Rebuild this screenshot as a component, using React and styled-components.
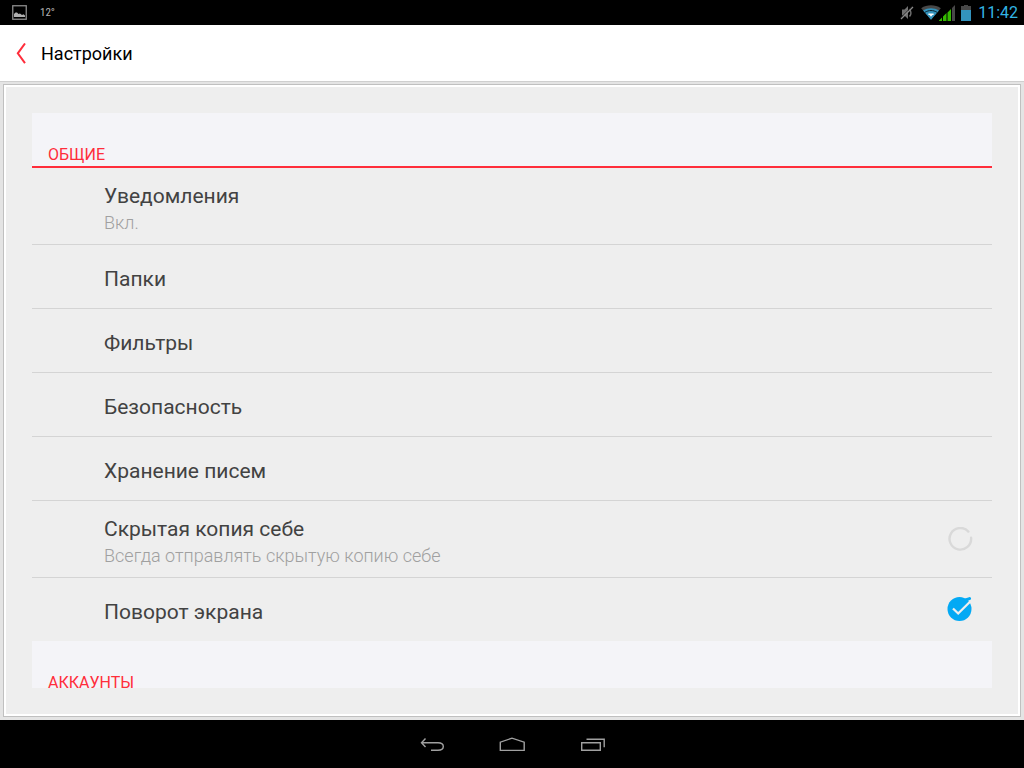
import React, { useState } from "react";
import styled, { createGlobalStyle } from "styled-components";

const GlobalStyle = createGlobalStyle`
  *, *::before, *::after { box-sizing: border-box; }
  body {
    margin: 0;
    background: #000;
    font-family: Roboto, "Noto Sans", sans-serif;
  }
`;

const Screen = styled.div`
  display: flex;
  flex-direction: column;
  height: 100vh;
  background: #e4e4e4;
`;

const StatusBar = styled.div`
  flex: none;
  display: flex;
  align-items: center;
  justify-content: space-between;
  height: 25px;
  padding: 0 6px 0 12px;
  background: #000;
`;

const StatusGroup = styled.div`
  display: flex;
  align-items: center;
  gap: ${(p) => p.$gap}px;
`;

const Clock = styled.time`
  color: #33b5e5;
  font-size: 16px;
  line-height: 25px;
`;

const Header = styled.header`
  flex: none;
  display: flex;
  align-items: center;
  gap: 14px;
  height: 57px;
  padding: 2px 16px 0;
  background: #fff;
  border-bottom: 1px solid #cfcfcf;
`;

const IconButton = styled.button`
  display: flex;
  padding: 0;
  border: 0;
  background: none;
  cursor: pointer;
`;

const Title = styled.h1`
  margin: 0;
  color: #000;
  font-size: 18px;
  line-height: 24px;
  font-weight: 400;
`;

const Panel = styled.main`
  flex: 1;
  min-height: 0;
  display: flex;
  margin: 2px 3px 3px;
  padding: 28px;
  background: #eee;
  border: 1px solid #c0c0c0;
  box-shadow: inset 0 0 0 2px #fff;
`;

const List = styled.div`
  flex: 1;
  min-width: 0;
  overflow-y: auto;
  scrollbar-width: none;
`;

const SectionTitle = styled.h2`
  margin: 0;
  padding: 33px 16px 2px;
  background: #f4f4f8;
  border-bottom: 2px solid #ff2d3b;
  color: #ff2d3b;
  font-size: 16px;
  line-height: 18px;
  font-weight: 400;
`;

const Rows = styled.ul`
  margin: 0;
  padding: 0;
  list-style: none;
`;

const RowItem = styled.li`
  border-bottom: 1px solid #d4d4d4;

  &:last-child { border-bottom: 0; }
`;

const Row = styled.button`
  display: flex;
  align-items: center;
  justify-content: space-between;
  width: 100%;
  padding: ${(p) => (p.$tall ? "10px 19px 9px 72px" : "15px 19px 15px 72px")};
  border: 0;
  background: none;
  font-family: inherit;
  text-align: left;
  cursor: pointer;
`;

const RowText = styled.span`
  display: flex;
  flex-direction: column;
  gap: 1px;
  padding-top: ${(p) => (p.$tall ? 4 : 5)}px;
`;

const RowTitle = styled.span`
  color: #424242;
  font-size: 21px;
  line-height: 28px;
`;

const RowNote = styled.span`
  color: #a0a0a0;
  font-size: 18px;
  line-height: 24px;
  font-weight: 300;
`;

const Toggle = styled.span`
  position: relative;
  display: flex;
  width: 26px;
  height: 26px;
`;

const Checkbox = styled.input`
  position: absolute;
  inset: 0;
  width: 100%;
  height: 100%;
  margin: 0;
  opacity: 0;
  cursor: pointer;
`;

const NavBar = styled.nav`
  flex: none;
  display: flex;
  align-items: center;
  justify-content: center;
  gap: 52px;
  height: 48px;
  padding-top: 2px;
  background: #000;
`;

const PictureIcon = () => (
  <svg width="15" height="15" viewBox="0 0 15 15" aria-hidden="true">
    <rect x="0.75" y="0.75" width="13.5" height="13.5" fill="none" stroke="#8c8c8c" strokeWidth="1.3" />
    <path d="M2 12V9L3.5 7.5H5L6.5 9L8 8.5L10 10L11.5 9.2L13 10.5V12Z" fill="#b0b0b0" />
  </svg>
);

const Temperature = styled.span`
  color: #b4b4b4;
  font-family: "Liberation Sans Narrow", "Roboto Condensed", Roboto, sans-serif;
  font-size: 11px;
  line-height: 25px;
`;

const MutedIcon = () => (
  <svg width="14" height="15" viewBox="0 0 14 15" aria-hidden="true">
    <path d="M2 4.5H4.5L8 1V14L4.5 10.5H2Z" fill="#707070" />
    <path d="M9.5 4.5C11.3 6.5 11.3 9.5 9.5 11.5" fill="none" stroke="#707070" strokeWidth="1.6" />
    <path d="M0.5 13L12.3 1.2" stroke="#1c1c1c" strokeWidth="0.9" />
    <path d="M1 14L13 2" stroke="#8a8a8a" strokeWidth="1.2" />
  </svg>
);

const WifiIcon = () => (
  <svg width="20" height="15" viewBox="0 0 20 15" aria-hidden="true">
    <path d="M0.2 3.2C6 -0.6 14 -0.6 19.8 3.2L10 14.8Z" fill="#484848" />
    <path d="M2.1 5.4C7 2.4 13 2.4 17.9 5.4L10 14.8Z" fill="#3393bd" />
    <path d="M3.8 7.4C7.7 4.9 12.3 4.9 16.2 7.4" fill="none" stroke="#0b2530" strokeWidth="1" />
    <path d="M7.4 8.4H12.6V10H11.4L10 11.8L8.6 10H7.4Z" fill="#fff" />
  </svg>
);

const SignalSvg = styled.svg`
  margin-left: -2px;
`;

const SignalIcon = () => (
  <SignalSvg width="16" height="16" viewBox="0 0 16 16" aria-hidden="true">
    <path d="M0 16V15.5L3 12.5V16ZM4 16V11.5L7.5 8V16ZM8.5 16V7.5L12 4V16Z" fill="#35b900" />
    <path d="M13 16V3L16 0V16Z" fill="#484848" />
  </SignalSvg>
);

const BatteryIcon = () => (
  <svg width="10" height="16" viewBox="0 0 10 16" aria-hidden="true">
    <path d="M3 0H7V1H10V5H0V1H3Z" fill="#484848" />
    <rect y="5" width="10" height="11" fill="#3393bd" />
  </svg>
);

const Spacer = styled.span`
  width: ${(p) => p.$width}px;
`;

const BackChevron = () => (
  <svg width="11" height="22" viewBox="0 0 11 22" aria-hidden="true">
    <path d="M9 0.5L1.8 10.3L9 20.1" fill="none" stroke="#ff2d3b" strokeWidth="2" />
  </svg>
);

const ToggleOff = () => (
  <svg width="26" height="26" viewBox="0 0 26 26" aria-hidden="true">
    <path d="M21.4 4.6A10.8 10.8 0 1 0 24.1 10.8" fill="none" stroke="#d9d9d9" strokeWidth="2.4" strokeLinecap="round" />
  </svg>
);

const ToggleOn = () => (
  <svg width="26" height="26" viewBox="0 0 26 26" aria-hidden="true">
    <circle cx="12.5" cy="12" r="12" fill="#03a9f4" />
    <path d="M18.5 3L22.5 1.6" stroke="#03a9f4" strokeWidth="3" strokeLinecap="round" />
    <path d="M6 11.5L11.2 16.5L24 3.8" fill="none" stroke="#eee" strokeWidth="2.3" />
  </svg>
);

const NavBackIcon = () => (
  <svg width="28" height="16" viewBox="0 0 28 16" aria-hidden="true">
    <path d="M7.5 1.5L3.5 5.8L7.5 10.1M3.5 5.8H20C23 5.8 25.3 7 25.3 9.6C25.3 12.2 23 13.3 20 13.3H13" fill="none" stroke="#a0a0a0" strokeWidth="1.4" />
  </svg>
);

const NavHomeIcon = () => (
  <svg width="28" height="16" viewBox="0 0 28 16" aria-hidden="true">
    <path d="M2.3 13.4V5.2L14 1.2L26.2 5.2V13.4Z" fill="none" stroke="#a0a0a0" strokeWidth="1.4" />
  </svg>
);

const NavRecentIcon = () => (
  <svg width="28" height="16" viewBox="0 0 28 16" aria-hidden="true">
    <path d="M3.7 5.7H22.3V13.3H3.7Z M8.5 2.2H26.2V10.2" fill="none" stroke="#a0a0a0" strokeWidth="1.4" />
  </svg>
);

const generalItems = [
  { title: "Уведомления", note: "Вкл." },
  { title: "Папки" },
  { title: "Фильтры" },
  { title: "Безопасность" },
  { title: "Хранение писем" },
  { title: "Скрытая копия себе", note: "Всегда отправлять скрытую копию себе", toggle: true, initial: false },
  { title: "Поворот экрана", toggle: true, initial: true },
];

function SettingRow({ title, note, toggle, initial }) {
  const [on, setOn] = useState(Boolean(initial));
  const tall = Boolean(note);
  const text = (
    <RowText $tall={tall}>
      <RowTitle>{title}</RowTitle>
      {note && <RowNote>{note}</RowNote>}
    </RowText>
  );
  return (
    <RowItem>
      {toggle ? (
        <Row as="label" $tall={tall}>
          {text}
          <Toggle>
            <Checkbox type="checkbox" checked={on} onChange={(e) => setOn(e.target.checked)} />
            {on ? <ToggleOn /> : <ToggleOff />}
          </Toggle>
        </Row>
      ) : (
        <Row type="button" $tall={tall}>{text}</Row>
      )}
    </RowItem>
  );
}

export default function App() {
  return (
    <Screen>
      <GlobalStyle />
      <StatusBar>
        <StatusGroup $gap={13}>
          <PictureIcon />
          <Temperature>12°</Temperature>
        </StatusGroup>
        <StatusGroup $gap={0}>
          <MutedIcon />
          <Spacer $width={7} />
          <WifiIcon />
          <SignalIcon />
          <Spacer $width={6} />
          <BatteryIcon />
          <Spacer $width={7} />
          <Clock>11:42</Clock>
        </StatusGroup>
      </StatusBar>
      <Header>
        <IconButton type="button" aria-label="Назад"><BackChevron /></IconButton>
        <Title>Настройки</Title>
      </Header>
      <Panel>
        <List>
          <SectionTitle>ОБЩИЕ</SectionTitle>
          <Rows>
            {generalItems.map((item) => <SettingRow key={item.title} {...item} />)}
          </Rows>
          <SectionTitle>АККАУНТЫ</SectionTitle>
        </List>
      </Panel>
      <NavBar>
        <IconButton type="button" aria-label="Назад"><NavBackIcon /></IconButton>
        <IconButton type="button" aria-label="Домой"><NavHomeIcon /></IconButton>
        <IconButton type="button" aria-label="Недавние"><NavRecentIcon /></IconButton>
      </NavBar>
    </Screen>
  );
}
